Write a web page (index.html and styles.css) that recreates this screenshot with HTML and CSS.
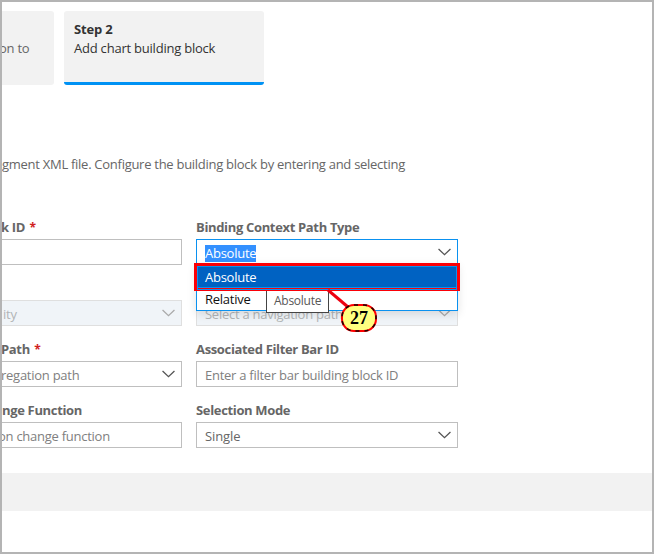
FILE: index.html
```html
<!DOCTYPE html>
<html lang="en">
<head>
<meta charset="utf-8">
<title>Add chart building block</title>
<link rel="stylesheet" href="styles.css">
</head>
<body>
<main class="page">
  <nav class="steps">
    <div class="step step-prev"><span class="step-text t-onto">on to</span></div>
    <div class="step step-active">
      <strong class="step-title"><span class="t-step">Step 2</span></strong>
      <span class="step-text"><span class="t-add">Add chart building block</span></span>
    </div>
  </nav>
  <p class="intro"><span class="t-intro">gment XML file. Configure the building block by entering and selecting</span></p>
  <form class="form">
    <div class="field left">
      <label><span class="t-kid">k ID</span> <i>*</i></label>
      <div class="input"></div>
    </div>
    <div class="field">
      <label><span class="t-binding">Binding Context Path Type</span></label>
      <div class="input open"><span class="selected t-abs">Absolute</span>
        <svg class="chevron" viewBox="0 0 12 7"><path d="M.5.8 6 6 11.5.8"/></svg>
        <div class="menu">
          <div class="option current"><span class="t-abs">Absolute</span></div>
          <div class="option"><span class="t-rel">Relative</span></div>
        </div>
      </div>
    </div>
    <div class="field left">
      <label></label>
      <div class="input disabled"><span class="t-city">ity</span>
        <svg class="chevron" viewBox="0 0 12 7"><path d="M.5.8 6 6 11.5.8"/></svg>
      </div>
    </div>
    <div class="field">
      <label></label>
      <div class="input disabled"><span class="t-nav">Select a navigation path</span>
        <svg class="chevron" viewBox="0 0 12 7"><path d="M.5.8 6 6 11.5.8"/></svg>
      </div>
    </div>
    <div class="field left">
      <label><span class="t-path">Path</span> <i>*</i></label>
      <div class="input"><span class="hint t-agg">regation path</span>
        <svg class="chevron" viewBox="0 0 12 7"><path d="M.5.8 6 6 11.5.8"/></svg>
      </div>
    </div>
    <div class="field">
      <label><span class="t-assoc">Associated Filter Bar ID</span></label>
      <div class="input"><span class="hint t-enter">Enter a filter bar building block ID</span></div>
    </div>
    <div class="field left">
      <label><span class="t-func">nge Function</span></label>
      <div class="input"><span class="hint t-change">on change function</span></div>
    </div>
    <div class="field">
      <label><span class="t-mode">Selection Mode</span></label>
      <div class="input"><span class="t-single">Single</span>
        <svg class="chevron" viewBox="0 0 12 7"><path d="M.5.8 6 6 11.5.8"/></svg>
      </div>
    </div>
  </form>
  <footer class="footer"></footer>
  <div class="highlight"></div>
  <div class="tooltip"><span class="t-tip">Absolute</span></div>
  <svg class="pointer" viewBox="0 0 24 20"><path d="M2 1 22 18"/></svg>
  <div class="badge">27
    <svg class="ring" viewBox="0 0 36 28"><rect x="1" y="1" width="34" height="26" rx="12"/></svg>
  </div>
</main>
</body>
</html>
```
FILE: styles.css
```css
* { box-sizing: border-box; }
body {
  margin: 0;
  font: 13px/18px "Open Sans", "Noto Sans", sans-serif;
  color: #666;
}
.page {
  position: relative;
  width: 654px;
  height: 554px;
  border: 2px solid #b4b4b4;
  background: #fff;
  overflow: hidden;
}
span { white-space: nowrap; letter-spacing: -.26px; }
.steps { display: flex; gap: 10px; padding-top: 9px; }
.step {
  height: 74px;
  padding-top: 9px;
  background: #f2f2f2;
  border-radius: 3px;
  color: #333;
}
.step-prev {
  width: 52px;
  padding-top: 28px;
  border-radius: 0 3px 3px 0;
  color: #666;
}
.step-active {
  display: flex;
  flex-direction: column;
  width: 200px;
  padding-left: 10px;
  border-bottom: 3px solid #0092f4;
}
.step-title { height: 19px; }
.intro { margin: 70px 0 0; height: 18px; }
.t-intro { letter-spacing: -.275px; }
.form {
  display: grid;
  grid-template-columns: 180px 262px;
  column-gap: 14px;
  grid-auto-rows: 61px;
  padding-top: 45px;
  height: 300px;
}
.field { display: flex; flex-direction: column; min-width: 0; }
label { height: 21px; font-weight: 700; white-space: nowrap; }
label span { letter-spacing: -.34px; }
label i { color: #d02020; font-style: normal; font-size: 12px; margin-left: 1px; }
.input {
  position: relative;
  display: flex;
  align-items: center;
  justify-content: space-between;
  height: 26px;
  padding: 2px 6px 0 8px;
  border: 1px solid #bfbfbf;
  background: #fff;
}
.left .input { padding-left: 0; border-left: 0; }
.hint { color: #808080; }
.chevron {
  width: 13px;
  height: 8px;
  margin: -3px 0 0 auto;
  fill: none;
  stroke: #555;
  stroke-width: 1.2;
}
.disabled { background: #f0f4f8; border-color: #dfdfdf; color: #b2b4b6; }
.disabled .chevron { stroke: #aaa; }
.open { z-index: 1; border-color: #0a91f0; }
.selected { height: 17px; line-height: 17px; background: #3390ff; color: #fff; }
.menu {
  position: absolute;
  left: -1px;
  top: 23px;
  width: 262px;
  height: 48px;
  border: 1px solid #0a91f0;
  background: #fff;
  box-shadow: 0 3px 9px rgba(0, 0, 0, .12);
}
.option { height: 22px; padding: 1px 0 0 8px; line-height: 20px; color: #111; }
.current {
  height: 24px;
  padding-top: 3px;
  background: #0062c2;
  border-bottom: 1px solid #0a91f0;
  color: #fff;
}
.footer { height: 38px; background: #f2f2f2; }
.highlight {
  position: absolute;
  z-index: 2;
  left: 192px;
  top: 261px;
  width: 266px;
  height: 28px;
  border: 3px solid #fb0007;
}
.highlight::after {
  content: "";
  display: block;
  height: 22px;
  border: 1px solid #0a91f0;
}
.tooltip {
  position: absolute;
  z-index: 3;
  left: 264px;
  top: 289px;
  width: 63px;
  height: 22px;
  padding: 1px 0 0 7px;
  border: 1px solid #444;
  border-top: 0;
  background: #fff;
  font-size: 12px;
  color: #575757;
}
.pointer {
  position: absolute;
  z-index: 4;
  left: 324px;
  top: 287px;
  width: 24px;
  height: 20px;
  fill: none;
  stroke: #ed0010;
  stroke-width: 3;
}
.badge {
  position: absolute;
  z-index: 5;
  left: 339px;
  top: 302px;
  width: 36px;
  height: 28px;
  border: 2px solid #f00;
  border-radius: 13px;
  background: #ffff80;
  color: #000;
  font: bold 18px/24px "Liberation Serif", serif;
  text-align: center;
}
.ring {
  position: absolute;
  left: -2px;
  top: -2px;
  width: 36px;
  height: 28px;
  fill: none;
  stroke: #200;
  stroke-width: 1.6;
  stroke-dasharray: 4 5;
}
.t-step { letter-spacing: -.15px; }
.t-add { letter-spacing: -.22px; }
.t-single { letter-spacing: -.1px; }
.t-onto { margin-left: -3px; }
.t-city { margin-left: 1px; }
.t-change { margin-left: -4px; }
.t-agg { margin-left: -1px; }
.t-path, .t-kid { margin-left: -1px; }
```
